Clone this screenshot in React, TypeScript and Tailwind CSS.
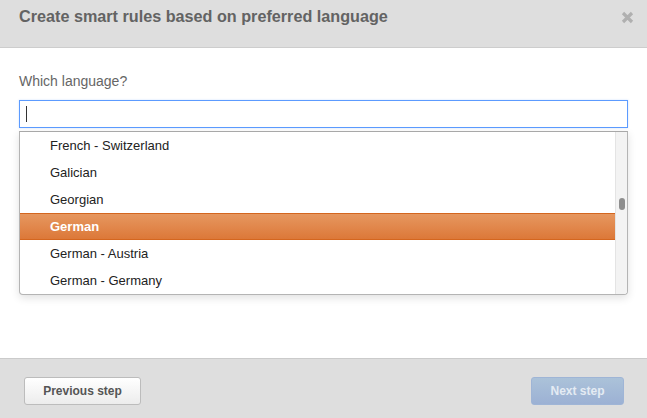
import React from "react";

const languages = [
  "French - Switzerland",
  "Galician",
  "Georgian",
  "German",
  "German - Austria",
  "German - Germany",
];

export default function App() {
  return (
    <div className="w-[647px] h-[418px] flex flex-col bg-white font-['Liberation_Sans',Arial,sans-serif] overflow-hidden">
      {/* Header */}
      <header className="h-[48px] shrink-0 flex items-start justify-between bg-[#dedede] border-b border-[#cdcdcd] pl-[19px] pr-[13px]">
        <h2 className="mt-[6px] text-[16.2px] leading-[20px] font-bold text-[#636363]">
          Create smart rules based on preferred language
        </h2>
        <button className="mt-[11px] text-[#b0b0b0]">
          <svg width="13" height="13" viewBox="0 0 13 13">
            <path d="M2 2 L11 11 M11 2 L2 11" stroke="currentColor" strokeWidth="3.2" strokeLinecap="butt" />
          </svg>
        </button>
      </header>

      {/* Body */}
      <div className="flex-1 px-[19px] pt-[24px]">
        <label className="block text-[14px] leading-[18px] text-[#666]">Which language?</label>
        <div className="mt-[10px] h-[28px] border border-[#5c9bff] flex items-center pl-[6px] shadow-[0_0_2px_rgba(92,155,255,0.3)]">
          <span className="w-px h-[16px] bg-[#333]" />
        </div>
        <div className="mt-[3px] flex border border-[#b4b4b4] border-t-[#a8a8a8] rounded-b-[4px] shadow-[0_3px_8px_rgba(0,0,0,0.12)] overflow-hidden bg-white">
          <ul className="flex-1">
            {languages.map((l) =>
              l === "German" ? (
                <li
                  key={l}
                  className="h-[27px] flex items-center pl-[30px] text-[13px] font-bold text-white bg-gradient-to-b from-[#e6975f] to-[#dc7838] border-y border-[#d4661f]"
                >
                  {l}
                </li>
              ) : (
                <li key={l} className="h-[27px] flex items-center pl-[30px] text-[13px] text-[#222]">
                  {l}
                </li>
              )
            )}
          </ul>
          <div className="w-[12px] bg-[#f3f3f3] border-l border-[#e4e4e4] pt-[66px] flex justify-center">
            <div className="w-[6px] h-[12px] rounded-[3px] bg-[#8e8e8e]" />
          </div>
        </div>
      </div>

      {/* Footer */}
      <footer className="h-[60px] shrink-0 flex items-start justify-between bg-[#dedede] border-t border-[#cbcbcb] pl-[24px] pr-[23px] pt-[18px]">
        <button className="w-[117px] h-[28px] rounded-[3px] border border-[#bcbcbc] bg-gradient-to-b from-[#ffffff] to-[#ececec] text-[12px] font-bold text-[#555]">
          Previous step
        </button>
        <button className="w-[93px] h-[28px] rounded-[3px] border border-[#9fb5d6] bg-gradient-to-b from-[#abc2d9] to-[#9cb1d4] text-[12px] font-bold text-[#e4ebf3]">
          Next step
        </button>
      </footer>
    </div>
  );
}
